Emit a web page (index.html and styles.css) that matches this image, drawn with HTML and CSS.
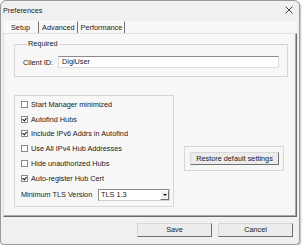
FILE: index.html
```html
<!DOCTYPE html>
<html lang="en">
<head>
    <meta charset="UTF-8">
    <title>Preferences</title>
    <link rel="stylesheet" href="styles.css">
</head>
<body>
    <div class="window">
        <!-- Title bar -->
        <div class="titlebar">
            <span class="title">Preferences</span>
            <svg class="close" width="8" height="8" viewBox="0 0 8 8">
                <path d="M0.5 0.5 L7.5 7.5 M7.5 0.5 L0.5 7.5" stroke="#333" stroke-width="0.9" fill="none"/>
            </svg>
        </div>

        <!-- Tabs -->
        <div class="tabs">
            <div class="tab active">Setup</div>
            <div class="tab">Advanced</div>
            <div class="tab">Performance</div>
        </div>

        <div class="panel">
            <fieldset class="required">
                <legend>Required</legend>
                <div class="field">
                    <span class="field-label">Client ID:</span>
                    <div class="input">DigiUser</div>
                </div>
            </fieldset>

            <div class="lower">
                <div class="options">
                    <div class="check"><span class="box"></span>Start Manager minimized</div>
                    <div class="check on"><span class="box"></span>Autofind Hubs</div>
                    <div class="check on"><span class="box"></span>Include IPv6 Addrs in Autofind</div>
                    <div class="check"><span class="box"></span>Use All IPv4 Hub Addresses</div>
                    <div class="check"><span class="box"></span>Hide unauthorized Hubs</div>
                    <div class="check on"><span class="box"></span>Auto-register Hub Cert</div>
                    <div class="tls">
                        <span class="tls-label">Minimum TLS Version</span>
                        <div class="select">
                            <span class="select-value">TLS 1.3</span>
                            <span class="select-btn"></span>
                        </div>
                    </div>
                </div>
                <div class="restore">
                    <button class="btn restore-btn">Restore default settings</button>
                </div>
            </div>
        </div>

        <div class="footer">
            <button class="btn">Save</button>
            <button class="btn">Cancel</button>
        </div>
    </div>
</body>
</html>
```

FILE: styles.css
```css
body {
    margin: 0;
    background: #ffffff;
    font-family: 'Liberation Sans', Arial, sans-serif;
    font-size: 7.3px;
    color: #1a1a1a;
}
.window {
    width: 300px;
    height: 245px;
    box-sizing: border-box;
    background: #f0f0f0;
    border: 1px solid #9a9a9a;
    border-radius: 6px 6px 4px 4px;
    box-shadow: 1px 1px 2px rgba(0, 0, 0, 0.25);
    display: flex;
    flex-direction: column;
}
.titlebar {
    height: 20px;
    display: flex;
    align-items: center;
    justify-content: space-between;
    padding: 0 6px 2px 2px;
    box-sizing: border-box;
}
.close {
    display: block;
}
.tabs {
    display: flex;
    height: 12px;
    background: #f7f7f7;
    margin: 0 2px 0 2px;
    padding-left: 4px;
}
.tab {
    line-height: 11px;
    padding: 0 2px;
    border-left: 1px solid #fff;
    border-right: 1px solid #707070;
    border-top: 1px solid #fff;
}
.tab.active {
    padding: 0 8px 0 3px;
}
.tab + .tab {
    border-left: none;
    padding: 0 2px 0 3px;
}
.panel {
    height: 184px;
    margin: 0 2px;
    box-sizing: border-box;
    background: #f7f7f7;
    border-top: 1px solid #dedede;
    border-left: 1px solid #dedede;
    border-right: 1px solid #6a6a6a;
    border-bottom: 1px solid #6a6a6a;
    box-shadow: inset -1px -1px 0 #a8a8a8;
    padding: 5px 0 0 10px;
}
.required {
    margin: 0;
    width: 274px;
    box-sizing: border-box;
    border: 1px solid #d6d6d6;
    padding: 7px 8px 8px 8px;
}
.required legend {
    padding: 0 1px;
    margin-left: 4px;
    line-height: 10px;
}
.field {
    display: flex;
    align-items: center;
    gap: 5px;
}
.input {
    flex: 1;
    height: 12px;
    box-sizing: border-box;
    background: #fff;
    border: 1px solid #dadada;
    border-top-color: #8a8a8a;
    line-height: 10px;
    padding-left: 3px;
}
.lower {
    display: flex;
    align-items: flex-start;
    gap: 10px;
    margin-top: 18px;
}
.options {
    width: 160px;
    height: 112px;
    box-sizing: border-box;
    border: 1px solid #d6d6d6;
    padding: 1px 0 0 6px;
}
.check {
    height: 14.8px;
    display: flex;
    align-items: center;
}
.box {
    width: 5px;
    height: 5px;
    border: 1px solid #8a8a8a;
    background: #fff;
    margin-right: 3px;
    position: relative;
}
.check.on .box::after {
    content: "";
    position: absolute;
    left: 1px;
    top: 0;
    width: 2px;
    height: 3px;
    border: solid #111;
    border-width: 0 1px 1px 0;
    transform: rotate(40deg);
}
.tls {
    display: flex;
    align-items: center;
    height: 18px;
}
.tls-label {
    width: 77px;
}
.select {
    width: 72px;
    height: 12px;
    box-sizing: border-box;
    background: #fff;
    border: 1px solid #8a8a8a;
    border-right-color: #d0d0d0;
    border-bottom-color: #d0d0d0;
    display: flex;
    align-items: center;
}
.select-value {
    flex: 1;
    padding-left: 2px;
}
.select-btn {
    width: 9px;
    height: 10px;
    box-sizing: border-box;
    background: #f0f0f0;
    border: 1px solid #fff;
    border-right-color: #707070;
    border-bottom-color: #707070;
    position: relative;
}
.select-btn::after {
    content: "";
    position: absolute;
    left: 2px;
    top: 3px;
    border-left: 2px solid transparent;
    border-right: 2px solid transparent;
    border-top: 2px solid #111;
}
.restore {
    margin-top: 51px;
    width: 100px;
    box-sizing: border-box;
    border: 1px solid #d6d6d6;
    padding: 5px 4px 5px 5px;
}
.btn {
    font: inherit;
    color: #1a1a1a;
    background: #ececec;
    border: 1px solid #d8d8d8;
    border-right-color: #6f6f6f;
    border-bottom-color: #6f6f6f;
    padding: 0;
    height: 14px;
    line-height: 12px;
}
.restore-btn {
    width: 89px;
    height: 13px;
}
.footer {
    display: flex;
    justify-content: flex-end;
    gap: 6px;
    padding: 6px 6px 0 0;
}
.footer .btn {
    width: 75px;
}
```
